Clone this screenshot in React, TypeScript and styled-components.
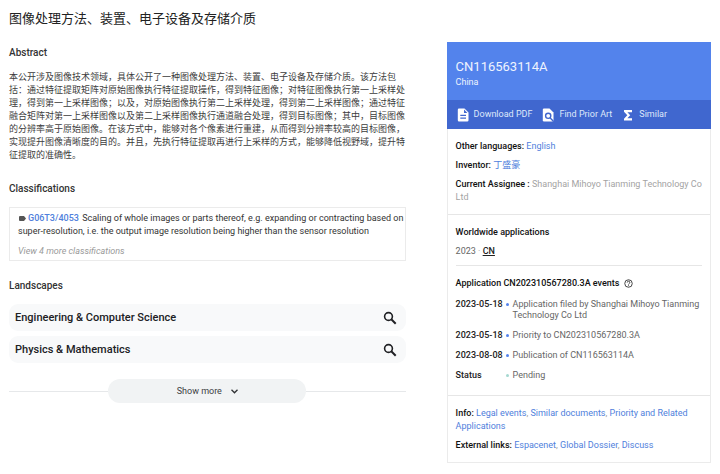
import React from "react";
import styled, { createGlobalStyle } from "styled-components";

const GlobalStyle = createGlobalStyle`
  * { box-sizing: border-box; }
  body {
    margin: 0;
    background: #fff;
    color: #333;
    font-family: Roboto, "Noto Sans CJK SC", sans-serif;
    font-size: 9px;
    line-height: 13px;
  }
  h1, h2, h3, p, dl, dd, ul { margin: 0; padding: 0; }
  a { color: #4f80dc; text-decoration: none; }
  button { font: inherit; border: 0; cursor: pointer; }
`;

const Page = styled.div`
  display: grid;
  grid-template-columns: minmax(0, 3fr) minmax(0, 2fr);
  column-gap: 41px;
  align-items: start;
  padding: 10px 9px 12px;
`;

const Main = styled.main`
  display: flex;
  flex-direction: column;
`;

const Title = styled.h1`
  font-size: 13px;
  line-height: 18px;
  font-weight: 400;
  color: #222;
`;

const SectionTitle = styled.h2`
  margin-top: 17px;
  font-size: 10px;
  line-height: 16px;
  font-weight: 500;
  color: #333;
`;

const Abstract = styled.p`
  margin-top: 10px;
  padding-bottom: 2px;
  color: #3c3c3c;
`;

const ClassBox = styled.div`
  margin-top: 10px;
  padding: 4px 0 2px 8px;
  border: 1px solid #ebebeb;
`;

const ClassCode = styled.a`
  font-weight: 500;
  margin: 0 1px 0 2px;
`;

const TagIcon = styled.svg`
  width: 7px;
  height: 5px;
  margin-left: 1px;
`;

const MoreClasses = styled.button`
  display: block;
  margin-top: 7px;
  padding: 0;
  background: none;
  color: #9a9a9a;
  font-style: italic;
`;

const Landscapes = styled.div`
  display: flex;
  flex-direction: column;
  gap: 5px;
  margin-top: 10px;
`;

const LandscapeRow = styled.button`
  display: flex;
  align-items: center;
  justify-content: space-between;
  height: 27px;
  padding: 0 9px 0 6px;
  border-radius: 9px;
  background: #f8f9fa;
  color: #202124;
  font-size: 11px;
  font-weight: 500;
  svg { width: 14px; height: 14px; }
`;

const MoreBar = styled.div`
  display: flex;
  align-items: center;
  margin-top: 16px;
  &::before, &::after {
    content: "";
    flex: 1;
    height: 1px;
    background: #e6e8ea;
  }
`;

const MoreButton = styled.button`
  display: flex;
  align-items: center;
  justify-content: center;
  gap: 9px;
  flex: 0 0 50%;
  height: 24px;
  border-radius: 12px;
  background: #f1f3f4;
  color: #3c4043;
  svg { width: 7px; height: 5px; }
`;

const Card = styled.aside`
  margin-top: 32px;
  border: 1px solid #ebebeb;
  border-top: 0;
  color: #111;
`;

const CardHead = styled.header`
  margin: 0 -1px;
  padding: 16px 9px 11px;
  background: #5383ec;
  color: #eef3fe;
`;

const PatentNumber = styled.h2`
  font-size: 13px;
  line-height: 18px;
  font-weight: 400;
`;

const Actions = styled.nav`
  display: flex;
  align-items: center;
  gap: 9px;
  height: 29px;
  margin: 0 -1px;
  padding: 0 9px;
  background: #4067cf;
`;

const Action = styled.a`
  display: flex;
  align-items: center;
  gap: 4px;
  color: #dfe7fa;
  white-space: nowrap;
  svg { width: 14px; height: 16px; fill: #fff; }
`;

const Section = styled.section<{ $line?: boolean }>`
  display: flex;
  flex-direction: column;
  gap: 6px;
  padding: 11px 8px 10px;
  border-top: ${(p) => (p.$line ? "1px solid #e6e6e6" : "0")};
`;

const Label = styled.strong`
  font-weight: 500;
  color: #111;
`;

const Muted = styled.span`
  color: #a3a3a3;
`;

const Heading = styled.h3`
  display: flex;
  align-items: center;
  gap: 5px;
  font-size: 9px;
  font-weight: 500;
  svg { width: 9px; height: 9px; }
`;

const Year = styled.p`
  color: #666;
  a { color: #222; font-weight: 500; text-decoration: underline; }
`;

const Rule = styled.hr`
  width: 100%;
  margin: 1px 0 5px;
  border: 0;
  border-top: 1px solid #e6e6e6;
`;

const Events = styled.dl`
  display: flex;
  flex-direction: column;
  gap: 9px;
  margin-top: 3px;
  padding-bottom: 4px;
  line-height: 11px;
`;

const EventRow = styled.div`
  display: grid;
  grid-template-columns: 50px 7px 1fr;
`;

const EventDate = styled.dt`
  font-weight: 500;
  color: #222;
`;

const Dot = styled.span<{ $pending?: boolean }>`
  width: 3px;
  height: 3px;
  margin-top: 4px;
  border-radius: 50%;
  background: ${(p) => (p.$pending ? "#a5d8d0" : "#5383ec")};
`;

const EventText = styled.dd`
  color: #666;
`;

const SearchIcon = () => (
  <svg viewBox="0 0 14 14" fill="none" stroke="#202124" aria-hidden="true">
    <circle cx="5.5" cy="5.5" r="3.9" strokeWidth="1.6" />
    <path d="M8.3 8.3L12.7 12.7" strokeWidth="2" />
  </svg>
);

const events = [
  { date: "2023-05-18", text: "Application filed by Shanghai Mihoyo Tianming Technology Co Ltd" },
  { date: "2023-05-18", text: "Priority to CN202310567280.3A" },
  { date: "2023-08-08", text: "Publication of CN116563114A" },
  { date: "Status", text: "Pending", pending: true },
];

const Links = ({ items }: { items: string[] }) => (
  <Muted>
    {items.map((item, i) => (
      <React.Fragment key={item}>
        {i > 0 && ", "}
        <a href="#">{item}</a>
      </React.Fragment>
    ))}
  </Muted>
);

export default function App() {
  return (
    <>
      <GlobalStyle />
      <Page>
        <Main>
          <Title>图像处理方法、装置、电子设备及存储介质</Title>
          <SectionTitle>Abstract</SectionTitle>
          <Abstract lang="zh-CN">
            本公开涉及图像技术领域，具体公开了一种图像处理方法、装置、电子设备及存储介质。该方法包括：通过特征提取矩阵对原始图像执行特征提取操作，得到特征图像；对特征图像执行第一上采样处理，得到第一上采样图像；以及，对原始图像执行第二上采样处理，得到第二上采样图像；通过特征融合矩阵对第一上采样图像以及第二上采样图像执行通道融合处理，得到目标图像；其中，目标图像的分辨率高于原始图像。在该方式中，能够对各个像素进行重建，从而得到分辨率较高的目标图像，实现提升图像清晰度的目的。并且，先执行特征提取再进行上采样的方式，能够降低视野域，提升特征提取的准确性。
          </Abstract>
          <SectionTitle>Classifications</SectionTitle>
          <ClassBox>
            <p>
              <TagIcon viewBox="0 0 7 5" aria-hidden="true">
                <path d="M1 0H5L7 2.5L5 5H1Q0 5 0 4V1Q0 0 1 0Z" fill="#555" />
              </TagIcon>
              <ClassCode href="#">G06T3/4053</ClassCode>
              {" "}Scaling of whole images or parts thereof, e.g. expanding or contracting based on
              super-resolution, i.e. the output image resolution being higher than the sensor resolution
            </p>
            <MoreClasses type="button">View 4 more classifications</MoreClasses>
          </ClassBox>
          <SectionTitle>Landscapes</SectionTitle>
          <Landscapes>
            {["Engineering & Computer Science", "Physics & Mathematics"].map((name) => (
              <LandscapeRow type="button" key={name}>
                {name}
                <SearchIcon />
              </LandscapeRow>
            ))}
          </Landscapes>
          <MoreBar>
            <MoreButton type="button">
              Show more
              <svg viewBox="0 0 7 5" fill="none" stroke="#303134" strokeWidth="1.3" aria-hidden="true">
                <path d="M0.5 0.8L3.5 3.8L6.5 0.8" />
              </svg>
            </MoreButton>
          </MoreBar>
        </Main>

        <Card>
          <CardHead>
            <PatentNumber>CN116563114A</PatentNumber>
            <p>China</p>
          </CardHead>
          <Actions>
            <Action href="#">
              <svg viewBox="0 0 14 16" aria-hidden="true">
                <path
                  fillRule="evenodd"
                  d="M3 1.5H8.5L12.5 5.5V13.2Q12.5 14.5 11.2 14.5H3Q1.8 14.5 1.8 13.2V2.8Q1.8 1.5 3 1.5ZM8 2.6V6H11.4ZM4.3 7.7V9H10V7.7ZM4.3 10.4V11.7H10V10.4Z"
                />
              </svg>
              Download PDF
            </Action>
            <Action href="#">
              <svg viewBox="0 0 14 16" aria-hidden="true">
                <path d="M3 1.5H8.5L12.5 5.5V13.2Q12.5 14.5 11.2 14.5H3Q1.8 14.5 1.8 13.2V2.8Q1.8 1.5 3 1.5Z" />
                <circle cx="7.2" cy="8.8" r="2.6" fill="#fff" stroke="#4067cf" strokeWidth="1.4" />
                <path d="M9 10.8L12.4 14.2" stroke="#4067cf" strokeWidth="1.4" />
              </svg>
              Find Prior Art
            </Action>
            <Action href="#">
              <svg viewBox="0 0 14 16" aria-hidden="true">
                <path d="M3 3H11V5.2H6.4L9.2 8.3L6.4 11.3H11V13.5H3V11.8L6.3 8.3L3 4.7Z" />
              </svg>
              Similar
            </Action>
          </Actions>
          <Section>
            <p><Label>Other languages:</Label> <a href="#">English</a></p>
            <p><Label>Inventor:</Label> <a href="#">丁盛豪</a></p>
            <p><Label>Current Assignee :</Label> <Muted>Shanghai Mihoyo Tianming Technology Co Ltd</Muted></p>
          </Section>
          <Section $line>
            <Heading>Worldwide applications</Heading>
            <Year>2023 <Muted>·</Muted> <a href="#">CN</a></Year>
            <Rule />
            <Heading>
              Application CN202310567280.3A events
              <svg viewBox="0 0 24 24" fill="none" stroke="#333" strokeWidth="2.4" aria-hidden="true">
                <circle cx="12" cy="12" r="10" />
                <path d="M8.5 9.5Q8.5 6 12 6Q15.5 6 15.5 9.2Q15.5 11 13.5 12.2Q12 13.2 12 15M12 16.8V19" />
              </svg>
            </Heading>
            <Events>
              {events.map((e) => (
                <EventRow key={e.text}>
                  <EventDate>{e.date}</EventDate>
                  <Dot $pending={e.pending} />
                  <EventText>{e.text}</EventText>
                </EventRow>
              ))}
            </Events>
          </Section>
          <Section $line>
            <p><Label>Info:</Label> <Links items={["Legal events", "Similar documents", "Priority and Related Applications"]} /></p>
            <p><Label>External links:</Label> <Links items={["Espacenet", "Global Dossier", "Discuss"]} /></p>
          </Section>
        </Card>
      </Page>
    </>
  );
}
